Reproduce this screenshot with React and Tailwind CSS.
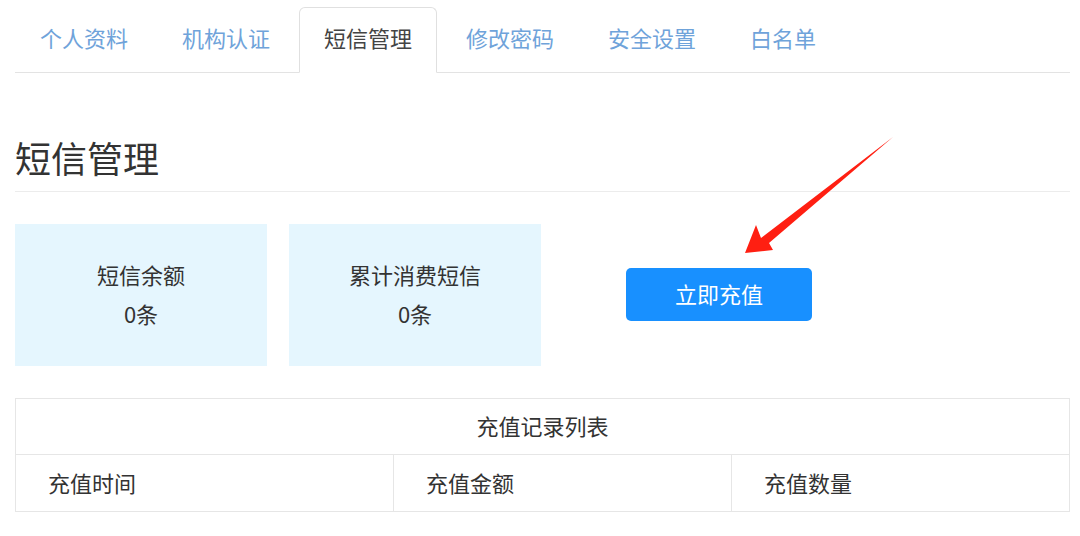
import React from "react";

const tabs = ["个人资料", "机构认证", "短信管理", "修改密码", "安全设置", "白名单"];

function Arrow() {
  return (
    <svg
      className="absolute left-0 top-0 pointer-events-none"
      width="1080"
      height="536"
      viewBox="0 0 1080 536"
    >
      <polygon
        points="893,137 769,243 773,250 745,253 756,225 761,238"
        fill="#ff1f12"
      />
    </svg>
  );
}

export default function App() {
  const active = 2;

  return (
    <div
      className="relative w-[1080px] h-[536px] bg-white overflow-hidden"
      style={{ fontFamily: '"Noto Sans CJK SC", "Noto Sans", sans-serif' }}
    >
      <div className="ml-[15px] w-[1055px] pt-[7px]">
        {/* tabs */}
        <div className="flex border-b border-[#e3e3e3]">
          {tabs.map((t, i) => (
            <div
              key={t}
              className={
                i === active
                  ? "-mb-px mr-[4px] h-[66px] pb-[5px] px-[24px] flex items-center text-[22px] text-[#444] bg-white border border-[#e0e0e0] border-b-white rounded-t-[6px]"
                  : "-mb-px mr-[4px] h-[66px] pb-[5px] px-[24px] flex items-center text-[22px] text-[#6fa3da] border border-transparent"
              }
            >
              {t}
            </div>
          ))}
        </div>

        {/* title */}
        <h1 className="mt-[59px] pb-[9px] border-b border-[#ececec] text-[36px] leading-[50px] text-[#333]">
          短信管理
        </h1>

        {/* stats */}
        <div className="mt-[32px] flex items-center">
          <div className="w-[252px] h-[142px] pb-[2px] bg-[#e5f6fe] flex flex-col items-center justify-center text-[22px] leading-[39px] text-[#333]">
            <span>短信余额</span>
            <span>0条</span>
          </div>
          <div className="ml-[22px] w-[252px] h-[142px] pb-[2px] bg-[#e5f6fe] flex flex-col items-center justify-center text-[22px] leading-[39px] text-[#333]">
            <span>累计消费短信</span>
            <span>0条</span>
          </div>
          <button className="ml-[85px] mb-[1px] w-[186px] h-[53px] pb-[2px] rounded-[5px] bg-[#1890ff] text-white text-[22px] flex items-center justify-center">
            立即充值
          </button>
        </div>

        {/* table */}
        <div className="mt-[32px] border border-[#e6e6e6] text-[22px] text-[#333]">
          <div className="h-[56px] pb-[2px] flex items-center justify-center border-b border-[#e6e6e6]">
            充值记录列表
          </div>
          <div className="grid grid-cols-[378px_338px_1fr] h-[56px]">
            <div className="flex items-center pb-[2px] pl-[32px] border-r border-[#e6e6e6]">充值时间</div>
            <div className="flex items-center pb-[2px] pl-[32px] border-r border-[#e6e6e6]">充值金额</div>
            <div className="flex items-center pb-[2px] pl-[32px]">充值数量</div>
          </div>
        </div>
      </div>

      <Arrow />
    </div>
  );
}
